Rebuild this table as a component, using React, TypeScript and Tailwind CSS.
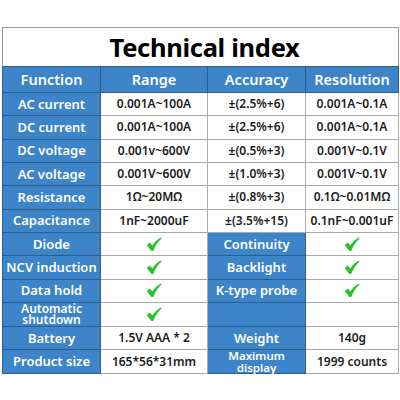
import React from "react";

const font = { fontFamily: '"Noto Sans", "Open Sans", Arial, sans-serif' };

function Check() {
  return (
    <svg width="16" height="15" viewBox="0 0 16 15" className="inline-block">
      <path
        d="M0.8 8 L3.7 5.6 L6.3 8.6 C8.4 5.3 11 2.4 14.8 0.4 L15.6 1.4 C12 4.4 9.4 8.4 7.2 14 L5.4 14 Z"
        fill="#27c22a"
      />
    </svg>
  );
}

type Cell = { text?: React.ReactNode; blue?: boolean; small?: string; check?: boolean };

const rows: Cell[][] = [
  [{ text: "AC current", blue: true }, { text: "0.001A~100A" }, { text: "±(2.5%+6)" }, { text: "0.001A~0.1A" }],
  [{ text: "DC current", blue: true }, { text: "0.001A~100A" }, { text: "±(2.5%+6)" }, { text: "0.001A~0.1A" }],
  [{ text: "DC voltage", blue: true }, { text: "0.001v~600V" }, { text: "±(0.5%+3)" }, { text: "0.001V~0.1V" }],
  [{ text: "AC voltage", blue: true }, { text: "0.001V~600V" }, { text: "±(1.0%+3)" }, { text: "0.001V~0.1V" }],
  [{ text: "Resistance", blue: true }, { text: "1Ω~20MΩ" }, { text: "±(0.8%+3)" }, { text: "0.1Ω~0.01MΩ" }],
  [{ text: "Capacitance", blue: true }, { text: "1nF~2000uF" }, { text: "±(3.5%+15)" }, { text: "0.1nF~0.001uF" }],
  [{ text: "Diode", blue: true }, { check: true }, { text: "Continuity", blue: true }, { check: true }],
  [{ text: "NCV induction", blue: true }, { check: true }, { text: "Backlight", blue: true }, { check: true }],
  [{ text: "Data hold", blue: true }, { check: true }, { text: "K-type probe", blue: true }, { check: true }],
  [{ text: <>Automatic<br />shutdown</>, blue: true, small: "text-[12px] leading-[11.5px]" }, { check: true }, { blue: true }, {}],
  [{ text: "Battery", blue: true }, { text: "1.5V AAA * 2" }, { text: "Weight", blue: true }, { text: "140g" }],
  [{ text: "Product size", blue: true }, { text: "165*56*31mm" }, { text: <>Maximum<br />display</>, blue: true, small: "text-[11.5px] leading-[11.5px]" }, { text: "1999 counts" }],
];

export default function App() {
  return (
    <div className="w-[400px] h-[400px] bg-white pt-[27px] pl-[2px]" style={font}>
      <table className="border-collapse table-fixed w-[396px] border border-[#9a9a9a]">
        <colgroup>
          <col className="w-[98px]" />
          <col className="w-[107px]" />
          <col className="w-[98px]" />
          <col className="w-[93px]" />
        </colgroup>
        <tbody>
          <tr className="h-[39px]">
            <td colSpan={4} className="text-center text-[25.5px] font-bold text-black tracking-[-0.3px] leading-none pt-[1px] pl-[8px]">
              Technical index
            </td>
          </tr>
          <tr className="h-[26px] bg-[#3d85c8] text-white text-[14.5px] font-semibold">
            {["Function", "Range", "Accuracy", "Resolution"].map((h) => (
              <td key={h} className="text-center border border-[#2d5f8e] leading-none">
                {h}
              </td>
            ))}
          </tr>
          {rows.map((r, i) => (
            <tr key={i} className="h-[23.33px]">
              {r.map((c, j) => (
                <td
                  key={j}
                  className={
                    c.blue
                      ? `text-center bg-[#3d85c8] text-white font-semibold border border-[#2d5f8e] ${c.small ?? "text-[13px] leading-none"}`
                      : "text-center text-[#1b1b1b] font-semibold text-[12px] leading-none border border-[#a9a9a9]"
                  }
                >
                  {c.check ? <Check /> : c.text}
                </td>
              ))}
            </tr>
          ))}
        </tbody>
      </table>
    </div>
  );
}
